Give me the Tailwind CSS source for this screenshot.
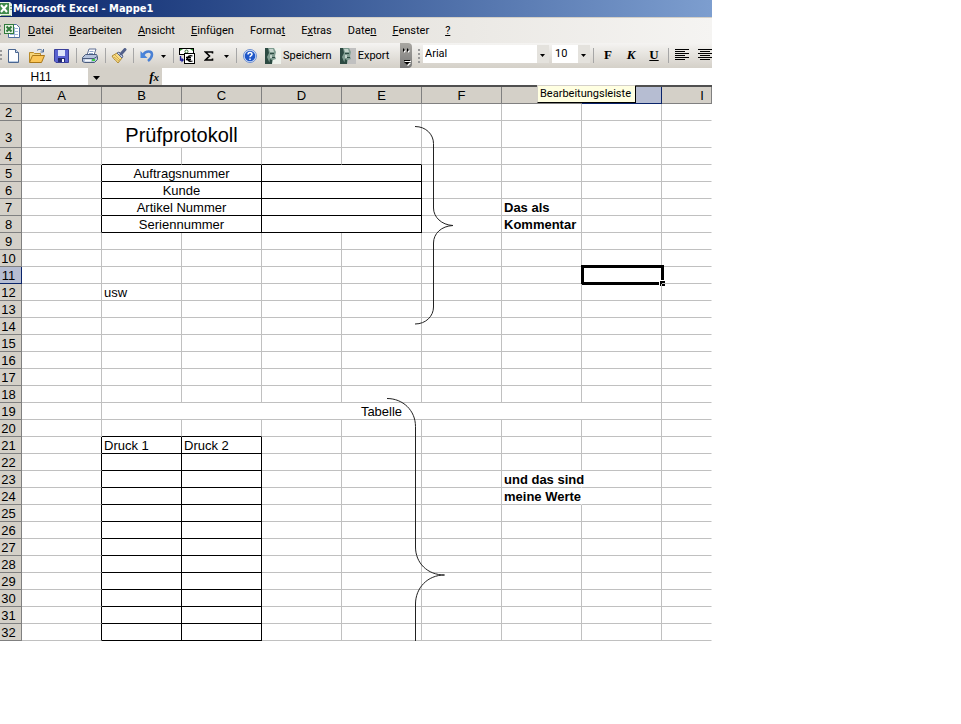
<!DOCTYPE html>
<html lang="de">
<head>
    <meta charset="UTF-8">
    <meta name="viewport" content="width=device-width, initial-scale=1.0">
    <title>Microsoft Excel - Mappe1</title>
    <script src="https://cdn.jsdelivr.net/npm/@tailwindcss/browser@4"></script>
</head>
<body class="bg-white text-black">
<div class="w-full max-w-[712px] overflow-hidden font-[Roboto,sans-serif] text-[11px] leading-4">

    <!-- Title bar -->
    <header class="flex h-[17px] items-center bg-linear-to-r from-[#0a246a] to-[#7d9ecf] text-white">
        <svg class="h-4 w-3" viewBox="0 0 12 16">
            <path d="M0 1h10l2 2v12H0z" fill="#e8f0e4"/>
            <rect y="2" width="9" height="11" fill="#3f8a4b"/>
            <path d="M1 4l6 7M7 4l-6 7" stroke="#fff" stroke-width="2"/>
            <path d="M10 5.500h2M10 8.500h2M1 14.500h10" stroke="#7fae7c"/>
        </svg>
        <h1 class="pl-px font-['DejaVu_Sans_Condensed',sans-serif] font-bold">Microsoft Excel - Mappe1</h1>
    </header>

    <!-- Menu bar -->
    <nav class="flex h-[26px] items-center border-t border-[#d4d0c8] bg-linear-to-r from-[#d8d4cc] to-[#f5f4f2]">
        <svg class="mr-2 h-4 w-5" viewBox="0 0 20 16">
            <path d="M0 2h1v2H0zM0 6h1v2H0zM0 10h1v2H0z" fill="#999"/>
            <path d="M8.500 1.500h8l3 3v10h-11z" fill="#fff" stroke="#4f6f9f"/>
            <path d="M12 5.500h6M12 8.500h6M10 11.500h8M14.500 4v10" stroke="#9fb7d8"/>
            <rect x="4.500" y="1.500" width="9" height="9" fill="#e4f0e0" stroke="#2f7a3b"/>
            <path d="M6.500 3.500l5 5M11.500 3.500l-5 5" stroke="#2f7a3b" stroke-width="2"/>
        </svg>
        <div class="flex gap-4">
            <button><u>D</u>atei</button>
            <button><u>B</u>earbeiten</button>
            <button><u>A</u>nsicht</button>
            <button><u>E</u>infügen</button>
            <button>Forma<u>t</u></button>
            <button>E<u>x</u>tras</button>
            <button>Date<u>n</u></button>
            <button><u>F</u>enster</button>
            <button><u>?</u></button>
        </div>
    </nav>

    <!-- Toolbars -->
    <div class="flex h-[25px] items-center bg-linear-to-b from-[#f5f4f2] to-[#d4d0c8]">
        <div class="flex h-full w-[400px] shrink-0 items-center">
            <svg class="mr-1 h-4 w-[3px]" viewBox="0 0 3 16"><path d="M0 2h2v2H0zM0 6h2v2H0zM0 10h2v2H0z" fill="#999"/></svg>
            <button aria-label="Neu" class="mr-2">
                <svg class="h-4 w-[13px]" viewBox="0 0 13 16">
                    <path d="M1.500 1.500h7l3 3v10h-10z" fill="#fdfeff" stroke="#4a6690"/>
                    <path d="M8.500 1.500v3h3" fill="#c8d8ee" stroke="#4a6690"/>
                    <path d="M2 13.500h9" stroke="#b9cbe4"/>
                </svg>
            </button>
            <button aria-label="Öffnen" class="mr-2">
                <svg class="h-4 w-[18px]" viewBox="0 0 18 16">
                    <path d="M1.500 14V4.500h4l1 1h6V8" fill="#f6d57a" stroke="#b98a28"/>
                    <path d="M1.500 14.500l3-7h12l-3 7z" fill="#fbc658" stroke="#a97718"/>
                    <path d="M9 2.500c2-2 5-1 6 1M15.500 1v3h-3" fill="none" stroke="#4a6a9a"/>
                </svg>
            </button>
            <button aria-label="Datei speichern" class="mr-[7px]">
                <svg class="h-4 w-[15px]" viewBox="0 0 15 16">
                    <path d="M.5 1.500h14v13H2l-1.500-1.500z" fill="#5a63d0" stroke="#3a3f9a"/>
                    <rect x="4" y="2" width="7" height="6" fill="#dfe6fa"/>
                    <rect x="4" y="10" width="7" height="4" fill="#232a70"/>
                    <rect x="8" y="11" width="2" height="3" fill="#fff"/>
                </svg>
            </button>
            <span class="mr-[5px] h-[15px] w-px bg-[#a6a6a6]"></span>
            <button aria-label="Drucken" class="mr-[7px]">
                <svg class="h-4 w-4" viewBox="0 0 16 16">
                    <path d="M5 7l2-6h7l-2 6z" fill="#fff" stroke="#5f6f94"/>
                    <path d="M7.500 3.500h4M7 5.500h4" stroke="#8ca3c8"/>
                    <path d="M.5 9.500l3-3h11l1 2v3l-3 3H2.500l-2-1z" fill="#b5c3dd" stroke="#4b5c7d"/>
                    <path d="M1 10.500h11l3-2" fill="none" stroke="#4b5c7d"/>
                    <path d="M3 12.500h6" stroke="#f4f7fb" stroke-width="2"/>
                    <rect x="10" y="11" width="3" height="2" fill="#3fd03f"/>
                </svg>
            </button>
            <span class="mr-[5px] h-[15px] w-px bg-[#a6a6a6]"></span>
            <button aria-label="Format übertragen" class="mr-[6px]">
                <svg class="h-4 w-4" viewBox="0 0 16 16">
                    <path d="M1 8l5-3 5 5-4 5c-1-2-4-3-6-7z" fill="#f7dc86" stroke="#b08a35"/>
                    <path d="M3 9l5 4M4 7l5 5" stroke="#d6ac4a"/>
                    <path d="M6 5l2-1 4 4-1 2z" fill="#d8dff0" stroke="#5a678a"/>
                    <path d="M10 6l4-4.500" stroke="#52608a" stroke-width="3" stroke-linecap="round"/>
                </svg>
            </button>
            <span class="mr-[6px] h-[15px] w-px bg-[#a6a6a6]"></span>
            <button aria-label="Rückgängig" class="mr-[7px]">
                <svg class="h-4 w-[14px]" viewBox="0 0 14 16">
                    <path d="M3 7c3-5 9-4 9-.5 0 3-1.500 4.500-4 6.500" fill="none" stroke="#4a80d4" stroke-width="2.500"/>
                    <path d="M.5 3v7h7z" fill="#4a86dc"/>
                </svg>
            </button>
            <button aria-label="Rückgängig Liste" class="mr-[7px]"><svg class="h-4 w-[5px]" viewBox="0 0 5 16"><path d="M0 7h5L2.500 10z"/></svg></button>
            <span class="mr-[5px] h-[15px] w-px bg-[#a6a6a6]"></span>
            <button aria-label="Euroumrechnung" class="mr-[9px]">
                <svg class="h-4 w-4" viewBox="0 0 16 16">
                    <rect x=".5" y=".5" width="14" height="6" fill="#fff" stroke="#000"/>
                    <path d="M1 1h3L1 3zM14 1h-3l3 2z" fill="#2f8f2f"/>
                    <circle cx="7.500" cy="3.500" r="1.500" fill="none" stroke="#2d6b2d"/>
                    <rect x="5.500" y="5.500" width="10" height="10" fill="#fff" stroke="#000"/>
                    <path d="M13.500 8c-3-1-5 .5-5 2.500s2 3.500 5 2.500M7 9.500h5M7 11.500h5" fill="none" stroke="#000" stroke-width="1.300"/>
                    <path d="M1.500 8v4h2" fill="none" stroke="#1a1a9a" stroke-width="1.300"/>
                    <path d="M2.500 9.500v5L5 12z" fill="#1a1a9a"/>
                </svg>
            </button>
            <button aria-label="AutoSumme" class="mr-[10px]">
                <svg class="h-4 w-[10px]" viewBox="0 0 10 16"><path d="M8.500 5.500V4H1.500L5.500 8l-4 4h7v-1.500" fill="none" stroke="#000" stroke-width="1.600"/></svg>
            </button>
            <button aria-label="AutoSumme Liste" class="mr-[7px]"><svg class="h-4 w-[5px]" viewBox="0 0 5 16"><path d="M0 7h5L2.500 10z"/></svg></button>
            <span class="mr-[6px] h-[15px] w-px bg-[#a6a6a6]"></span>
            <button aria-label="Hilfe" class="mr-[8px]">
                <svg class="h-4 w-[14px]" viewBox="0 0 14 16">
                    <circle cx="7" cy="8" r="6.500" fill="#dbe6fa" stroke="#6d8fd0"/>
                    <circle cx="7" cy="8" r="5.300" fill="#1f57c8"/>
                    <path d="M5 6.500c0-2.500 4-2.500 4-.3C9 7.700 7 7.500 7 9.300M7 10.500V12" fill="none" stroke="#fff" stroke-width="1.500"/>
                </svg>
            </button>
            <button class="mr-2 flex items-center gap-[2px]">
                <svg class="h-4 w-4" viewBox="0 0 16 16">
                    <rect width="16" height="16" fill="#eef2ec"/>
                    <path d="M0 0h9l2 4-1 4 1 3-3 1-1 4H0z" fill="#7f9c90"/>
                    <path d="M0 0h3l1 5-2 4 3 7H0zM5 5h4v1H5zM7 9h3v1H7zM5 11l2 1v4H4z" fill="#2c4a42"/>
                    <path d="M4 1h4l1 3H5zM5 7h2v3H5z" fill="#c3d3cb"/>
                </svg>Speichern
            </button>
            <button class="flex items-center gap-[2px]">
                <svg class="h-4 w-4" viewBox="0 0 16 16">
                    <rect width="16" height="16" fill="#c0c0c0"/>
                    <path d="M0 0h9l2 4-1 4 1 3-3 1-1 4H0z" fill="#7f9c90"/>
                    <path d="M0 0h3l1 5-2 4 3 7H0zM5 5h4v1H5zM7 9h3v1H7zM5 11l2 1v4H4z" fill="#2c4a42"/>
                    <path d="M4 1h4l1 3H5zM5 7h2v3H5z" fill="#c3d3cb"/>
                </svg>Export
            </button>
        </div>
        <button aria-label="Optionen für Symbolleisten" class="mr-[6px] h-full shrink-0 rounded-r-sm bg-linear-to-b from-[#a9a7a2] to-[#787878]">
            <svg class="h-[25px] w-3" viewBox="0 0 12 25">
                <path d="M4 6l2 2-2 2zM8 6l2 2-2 2zM5 18h6v1H5zM5 20h6l-3 3z" fill="#fff"/>
                <path d="M3 5l2 2-2 2zM7 5l2 2-2 2zM4 17h6v1H4zM4 19h6l-3 3z" fill="#000"/>
            </svg>
        </button>
        <svg class="mr-[2px] h-4 w-[3px] shrink-0" viewBox="0 0 3 16"><path d="M0 1h2v2H0zM0 5h2v2H0zM0 9h2v2H0zM0 13h2v2H0z" fill="#999"/></svg>
        <div class="relative mr-[3px] mb-1 shrink-0">
            <select aria-label="Schriftart" class="block h-[18px] w-[126px] appearance-none border-r-[12px] border-[#e4e2dd] bg-white pl-[2px]"><option>Arial</option></select>
            <svg class="pointer-events-none absolute top-1 right-1 h-3 w-[5px]" viewBox="0 0 5 12"><path d="M0 5h5L2.500 8z"/></svg>
        </div>
        <div class="relative mr-[3px] mb-1 shrink-0">
            <select aria-label="Schriftgrad" class="block h-[18px] w-[38px] appearance-none border-r-[12px] border-[#e4e2dd] bg-white pl-[3px]"><option>10</option></select>
            <svg class="pointer-events-none absolute top-1 right-1 h-3 w-[5px]" viewBox="0 0 5 12"><path d="M0 5h5L2.500 8z"/></svg>
        </div>
        <span class="h-[15px] w-px shrink-0 bg-[#a6a6a6]"></span>
        <div class="flex shrink-0 gap-[3px] px-1 pb-[2px] font-['Liberation_Serif',serif] text-[13px] font-bold">
            <button class="w-5">F</button>
            <button class="w-5 italic">K</button>
            <button class="w-5 underline">U</button>
        </div>
        <span class="mr-[6px] h-[15px] w-px shrink-0 bg-[#a6a6a6]"></span>
        <button aria-label="Linksbündig" class="mr-2 shrink-0">
            <svg class="h-4 w-[15px]" viewBox="0 0 15 16" stroke="#000"><path d="M0 1.500h14M0 3.500h10M0 5.500h14M0 7.500h10M0 9.500h14M0 11.500h10"/></svg>
        </button>
        <button aria-label="Zentriert" class="shrink-0">
            <svg class="h-4 w-[15px]" viewBox="0 0 15 16" stroke="#000"><path d="M0 1.500h14M2 3.500h10M0 5.500h14M2 7.500h10M0 9.500h14M2 11.500h10"/></svg>
        </button>
    </div>

    <!-- Formula bar -->
    <div class="relative flex h-[17px] font-['Liberation_Sans',Arial,sans-serif] text-xs">
        <input aria-label="Namenfeld" value="H11" class="w-[88px] shrink-0 bg-white pr-[6px] text-center">
        <div class="flex w-[74px] shrink-0 items-center justify-between bg-[#d4d0c8] pr-[3px] pl-[5px]">
            <button aria-label="Namenliste"><svg class="h-4 w-[7px]" viewBox="0 0 7 16"><path d="M0 7h7L3.500 11z"/></svg></button>
            <button aria-label="Funktion einfügen" class="font-['Liberation_Serif',serif] text-[13px] leading-4 font-bold italic">f<span class="text-[11px]">x</span></button>
        </div>
        <input aria-label="Bearbeitungsleiste" class="min-w-0 grow bg-white">
        <div role="tooltip" class="absolute top-[17px] left-[537px] z-10 h-[18px] border border-[#d4d0c8] border-r-black border-b-black bg-[#ffffe1] pr-1 pl-[2px] font-[Roboto,sans-serif] text-[11px] leading-4">Bearbeitungsleiste</div>
    </div>

    <!-- Worksheet -->
    <div class="relative overflow-hidden border-t-2 border-[#505050] font-['Liberation_Sans',Arial,sans-serif] text-[13px]">
        <table class="w-full table-fixed border-separate border-spacing-0">
            <colgroup>
                <col class="w-[22px]">
                <col class="w-20"><col class="w-20"><col class="w-20"><col class="w-20">
                <col class="w-20"><col class="w-20"><col class="w-20"><col class="w-20">
                <col>
            </colgroup>
            <thead><tr id="columns"></tr></thead>
            <tbody id="rows"></tbody>
        </table>
        <!-- Braces drawn on the sheet -->
        <svg class="pointer-events-none absolute top-0 left-0 h-[554px] w-[712px]" viewBox="0 0 712 554" fill="none" stroke="#222">
            <path d="M415 39.500c11 0 18.500 8 18.500 17V121c0 9 8 17 19.500 17.500c-11.500.5-19.500 8-19.500 17.500v64c0 9-7.500 17-18.500 17"/>
            <path d="M387 311.500c16 0 28.500 12 28.500 28V460c0 16 12 28 29 28c-17 0-29 13-29 29v37"/>
        </svg>
    </div>
</div>

<script>
    const head = 'h-[17px] border-r border-b border-[#808080] bg-[#d4d0c8] px-0 pt-[2px] font-normal leading-[14px]';
    const headActive = 'h-[17px] border-r border-b border-[#0a246a] bg-[#b6bdd2] px-0 pt-[2px] font-normal leading-[14px]';

    // The tooltip lies over the letters of G and H, so these stay unlettered
    const letter = c => c === 'G' || c === 'H' ? '' : c === 'I' ? '<span class="block w-20 text-center">I</span>' : c;
    document.getElementById('columns').innerHTML = `<th class="${head}"></th>` +
        [...'ABCDEFGHI'].map(c => `<th scope="col" aria-label="${c}" class="${c === 'H' ? headActive : head}">${letter(c)}</th>`).join('');

    // Cells with content: text, number of merged columns and text style
    const cells = {
        B3: { text: 'Prüfprotokoll', span: 2, style: 'text-center text-[20px]' },
        B5: { text: 'Auftragsnummer', span: 2, style: 'text-center' },
        B6: { text: 'Kunde', span: 2, style: 'text-center' },
        B7: { text: 'Artikel Nummer', span: 2, style: 'text-center' },
        B8: { text: 'Seriennummer', span: 2, style: 'text-center' },
        D5: { span: 2 }, D6: { span: 2 }, D7: { span: 2 }, D8: { span: 2 },
        G7: { text: 'Das als', style: 'font-bold' },
        G8: { text: 'Kommentar', style: 'font-bold' },
        B12: { text: 'usw' },
        B19: { text: 'Tabelle', span: 7, style: 'text-center' },
        B21: { text: 'Druck 1' },
        C21: { text: 'Druck 2' },
        G23: { text: 'und das sind', style: 'font-bold', open: true },
        G24: { text: 'meine Werte', style: 'font-bold', open: true },
    };

    // Frames around B5:E8 and B21:C32
    const framed = (col, row) => (row >= 5 && row <= 8 && col >= 1 && col <= 4) || (row >= 21 && row <= 32 && col >= 1 && col <= 2);

    let html = '';
    for (let row = 2; row <= 32; row++) {
        html += `<tr class="${row === 3 ? 'h-[27px]' : 'h-[17px]'}"><th scope="row" class="${row === 11 ? headActive : head} pr-1 align-bottom ${row === 3 ? 'pb-[2px]' : ''}">${row}</th>`;
        for (let col = 0; col < 9; col++) {
            const name = 'ABCDEFGHI'[col] + row;
            const cell = cells[name] || {};
            const last = col + (cell.span || 1) - 1;
            const right = cell.open || col === 8 ? 'border-r-transparent' : framed(last, row) || framed(last + 1, row) ? 'border-r-black' : 'border-r-[#c0c0c0]';
            const bottom = framed(col, row) || framed(col, row + 1) ? 'border-b-black' : 'border-b-[#c0c0c0]';
            const cursor = name === 'H11' ? '<span class="absolute -top-[2px] -left-px h-5 w-[83px] border-[3px] border-black"><span class="absolute -right-[4px] -bottom-[4px] size-[6px] border-t border-l border-white bg-black"></span></span>' : '';
            const pad = cell.style && cell.style.startsWith('text-center') ? '' : 'pl-[2px]';
            html += `<td colspan="${cell.span || 1}" class="relative border-r border-b px-0 pt-[2px] ${pad} leading-[14px] whitespace-nowrap ${right} ${bottom} ${cell.style || ''}">${cell.text || ''}${cursor}</td>`;
            col = last;
        }
        html += '</tr>';
    }
    document.getElementById('rows').innerHTML = html;
</script>
</body>
</html>
